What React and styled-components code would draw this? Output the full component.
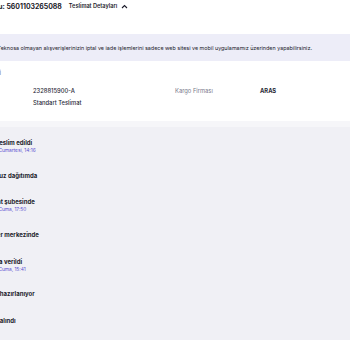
import React from 'react';
import styled, { createGlobalStyle } from 'styled-components';

const GlobalStyle = createGlobalStyle`
  html, body {
    margin: 0;
    padding: 0;
    background: #ffffff;
    overflow: hidden;
  }
  body {
    font-family: Inter, "Noto Sans", sans-serif;
    color: #1c1c2b;
  }
`;

const EVENTS = [
  { title: 'Kargo teslim edildi', date: '13 Nisan Cumartesi, 14:16' },
  { title: 'Kargonuz dağıtımda' },
  { title: 'Teslimat şubesinde', date: '12 Nisan Cuma, 17:50' },
  { title: 'Transfer merkezinde' },
  { title: 'Kargoya verildi', date: '12 Nisan Cuma, 15:41' },
  { title: 'Sipariş hazırlanıyor' },
  { title: 'Sipariş alındı' },
];

const App = () => {
  return (
    <>
      <GlobalStyle />
      <Page>
        <Header>
          <TrackingCode>Takip Kodu: 5601103265088</TrackingCode>
          <Toggle>
            Teslimat Detayları
            <svg width="7" height="5" viewBox="0 0 7 5" fill="none">
              <path d="M1 4l2.5-2.5L6 4" stroke="#1c1c2b" strokeWidth="1.1" />
            </svg>
          </Toggle>
        </Header>

        <Notice>
          Satıcısı Teknosa olmayan alışverişlerinizin iptal ve iade işlemlerini sadece web sitesi ve
          mobil uygulamamız üzerinden yapabilirsiniz.
        </Notice>

        <Details>
          <SectionLabel>Kargo Bilgisi</SectionLabel>
          <InfoGrid>
            <span />
            <Value>2328815900-A</Value>
            <Key>Kargo Firması</Key>
            <Value $strong>ARAS</Value>
            <span />
            <Value>Standart Teslimat</Value>
          </InfoGrid>
        </Details>

        <Timeline>
          {EVENTS.map((ev) => (
            <Event key={ev.title}>
              <EventTitle>{ev.title}</EventTitle>
              {ev.date && <EventDate>{ev.date}</EventDate>}
            </Event>
          ))}
        </Timeline>
      </Page>
    </>
  );
};

const Page = styled.div`
  display: flex;
  flex-direction: column;
  width: 390px;
  margin-left: -40px;
`;

const Header = styled.div`
  display: flex;
  align-items: center;
  gap: 7px;
  height: 12px;
  padding-left: 5px;
`;

const TrackingCode = styled.span`
  font-size: 6.9px;
  font-weight: 700;
`;

const Toggle = styled.span`
  display: inline-flex;
  align-items: center;
  gap: 4px;
  font-size: 5.6px;
  font-weight: 600;
`;

const Notice = styled.div`
  margin-top: 22px;
  height: 27px;
  display: flex;
  align-items: center;
  padding-left: 18px;
  background: #ededf8;
  font-size: 5.4px;
  white-space: nowrap;
`;

const Details = styled.div`
  display: flex;
  flex-direction: column;
  height: 60px;
  padding-top: 9px;
  box-sizing: border-box;
`;

const SectionLabel = styled.div`
  font-size: 5.6px;
  color: #555566;
  line-height: 7px;
  padding-left: 8px;
`;

const InfoGrid = styled.div`
  display: grid;
  grid-template-columns: 73px 142px 85px 1fr;
  row-gap: 5px;
  margin-top: 10px;
  line-height: 7px;
`;

const Key = styled.span`
  font-size: 5.8px;
  color: #77778a;
`;

const Value = styled.span`
  font-size: 5.8px;
  font-weight: ${(p) => (p.$strong ? 700 : 500)};
  color: #2a2a38;
`;

const Timeline = styled.div`
  display: flex;
  flex-direction: column;
  gap: 18.7px;
  background: #f0f0f5;
  border-top: 6px solid #f6f6f9;
  padding: 12px 0 15px 18px;
  height: 219px;
  box-sizing: border-box;
`;

const Event = styled.div`
  display: flex;
  flex-direction: column;
`;

const EventTitle = styled.span`
  font-size: 6px;
  font-weight: 700;
  line-height: 8px;
  color: #1c1c2b;
`;

const EventDate = styled.span`
  font-size: 4.8px;
  line-height: 6px;
  color: #5b4fd0;
`;

export default App;
